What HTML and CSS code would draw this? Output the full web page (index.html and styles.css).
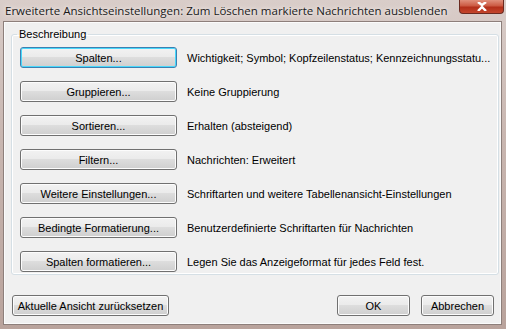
FILE: index.html
```html
<!DOCTYPE html>
<html lang="de">
<head>
  <meta charset="UTF-8" />
  <title>Erweiterte Ansichtseinstellungen</title>
  <link rel="stylesheet" href="styles.css">
</head>
<body>
  <div class="window">
    <div class="titlebar">
      <span class="title">Erweiterte Ansichtseinstellungen: Zum Löschen markierte Nachrichten ausblenden</span>
      <button class="close" aria-label="Schließen">
        <svg width="12" height="9" viewBox="0 0 12 9"><path d="M2 0 L6 3 L10 0 M2 9 L6 5 L10 9" stroke="#fff" stroke-width="2.4" fill="none"/></svg>
      </button>
    </div>

    <div class="client">
      <fieldset class="group">
        <legend>Beschreibung</legend>
        <div class="row">
          <button class="btn default">Spalten...</button>
          <span class="desc">Wichtigkeit; Symbol; Kopfzeilenstatus; Kennzeichnungsstatu...</span>
        </div>
        <div class="row">
          <button class="btn">Gruppieren...</button>
          <span class="desc">Keine Gruppierung</span>
        </div>
        <div class="row">
          <button class="btn">Sortieren...</button>
          <span class="desc">Erhalten (absteigend)</span>
        </div>
        <div class="row">
          <button class="btn">Filtern...</button>
          <span class="desc">Nachrichten: Erweitert</span>
        </div>
        <div class="row">
          <button class="btn">Weitere Einstellungen...</button>
          <span class="desc">Schriftarten und weitere Tabellenansicht-Einstellungen</span>
        </div>
        <div class="row">
          <button class="btn">Bedingte Formatierung...</button>
          <span class="desc">Benutzerdefinierte Schriftarten für Nachrichten</span>
        </div>
        <div class="row">
          <button class="btn">Spalten formatieren...</button>
          <span class="desc">Legen Sie das Anzeigeformat für jedes Feld fest.</span>
        </div>
      </fieldset>

      <div class="footer">
        <button class="btn reset">Aktuelle Ansicht zurücksetzen</button>
        <div class="actions">
          <button class="btn small">OK</button>
          <button class="btn small">Abbrechen</button>
        </div>
      </div>
    </div>
  </div>
</body>
</html>
```

FILE: styles.css
```css
body {
  margin: 0;
  font-family: 'Liberation Sans', sans-serif;
  font-size: 11px;
  color: #000;
}

.window {
  width: 506px;
  height: 329px;
  box-sizing: border-box;
  padding: 0 4px 4px 3px;
  background: linear-gradient(180deg, #d9cdc9 0%, #c9b7b1 40%, #b9a39c 100%);
  display: flex;
  flex-direction: column;
}

.titlebar {
  height: 21px;
  display: flex;
  justify-content: space-between;
  align-items: flex-start;
}

.title {
  font-family: 'Open Sans', sans-serif;
  font-size: 11.5px;
  color: #1a1a1a;
  padding: 3px 0 0 2px;
  text-shadow: 0 0 6px #f4eeec, 0 0 3px #f4eeec;
}

.close {
  width: 45px;
  height: 14px;
  margin-right: -2px;
  padding: 0;
  border: 1px solid #6b2a20;
  border-top: none;
  border-radius: 0 0 4px 4px;
  background: linear-gradient(180deg, #e08f7b 0%, #cc5a43 45%, #b32f1a 55%, #c4462c 100%);
  display: flex;
  align-items: center;
  justify-content: center;
}

.client {
  flex: 1;
  background: #f0f0f0;
  border: 1px solid #8d7f7b;
  box-shadow: inset 0 0 0 1px #fbfbfb;
  padding: 6px 6px 8px 7px;
  display: flex;
  flex-direction: column;
}

.group {
  margin: 0;
  height: 247px;
  box-sizing: border-box;
  border: 1px solid #d5dfe5;
  border-radius: 3px;
  box-shadow: inset 0 0 0 1px #fff;
  padding: 6px 8px 0 8px;
  display: flex;
  flex-direction: column;
  gap: 13px;
}

.group legend {
  padding: 0 2px;
  margin-left: -3px;
  line-height: 13px;
}

.row {
  display: flex;
  align-items: center;
  gap: 10px;
  height: 21px;
  flex: none;
}

.btn {
  font-family: 'Liberation Sans', sans-serif;
  font-size: 11px;
  color: #000;
  width: 157px;
  height: 21px;
  flex: none;
  padding: 0;
  border: 1px solid #707070;
  border-radius: 3px;
  background: linear-gradient(180deg, #f2f2f2 0%, #ebebeb 45%, #dddddd 50%, #cfcfcf 100%);
  box-shadow: inset 0 0 0 1px #fcfcfc;
}

.btn.default {
  border-color: #3c7fb1;
  box-shadow: inset 0 0 0 1px #48d8fb;
}

.desc {
  white-space: nowrap;
}

.footer {
  margin-top: auto;
  display: flex;
  justify-content: space-between;
  align-items: center;
}

.btn.reset {
  margin-left: 1px;
}

.actions {
  display: flex;
  gap: 11px;
  margin-right: 1px;
}

.btn.small {
  width: 73px;
}
```
